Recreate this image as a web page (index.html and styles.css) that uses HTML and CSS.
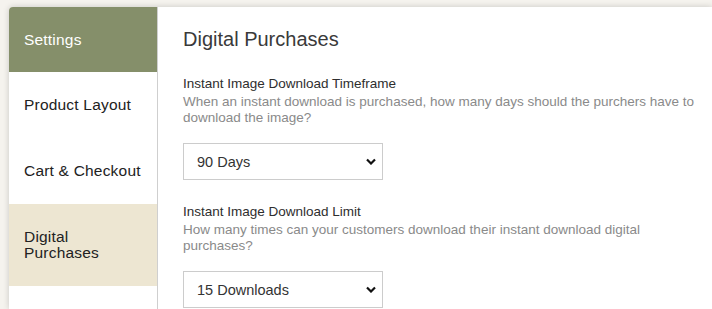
FILE: index.html
```html
<!DOCTYPE html>
<html lang="en">
<head>
    <meta charset="UTF-8">
    <meta name="viewport" content="width=device-width, initial-scale=1.0">
    <title>Store Settings - Digital Purchases</title>
    <link rel="stylesheet" href="styles.css">
</head>
<body>
    <div class="panel">
        <nav class="sidebar">
            <div class="nav-item nav-head">Settings</div>
            <div class="nav-item">Product Layout</div>
            <div class="nav-item">Cart &amp; Checkout</div>
            <div class="nav-item active">Digital<br>Purchases</div>
        </nav>

        <main class="content">
            <h2>Digital Purchases</h2>

            <div class="field">
                <label for="timeframe">Instant Image Download Timeframe</label>
                <p class="hint">When an instant download is purchased, how many days should the purchers have to download the image?</p>
                <select id="timeframe" class="select">
                    <option>90 Days</option>
                    <option>30 Days</option>
                    <option>60 Days</option>
                </select>
            </div>

            <div class="field">
                <label for="limit">Instant Image Download Limit</label>
                <p class="hint">How many times can your customers download their instant download digital purchases?</p>
                <select id="limit" class="select">
                    <option>15 Downloads</option>
                    <option>5 Downloads</option>
                    <option>10 Downloads</option>
                </select>
            </div>
        </main>
    </div>
</body>
</html>
```

FILE: styles.css
```css
* {
    margin: 0;
    padding: 0;
    box-sizing: border-box;
}

body {
    font-family: "Liberation Sans", Arial, sans-serif;
    background: #f5f3ee;
    padding: 7px 0 0 9px;
    height: 309px;
    overflow: hidden;
}

.panel {
    display: flex;
    background: white;
    border-radius: 4px 0 0 0;
    box-shadow: 0 0 6px rgba(0, 0, 0, 0.18);
    height: 302px;
}

.sidebar {
    width: 149px;
    flex-shrink: 0;
    border-right: 1px solid #cfcfcf;
}

.nav-item {
    padding: 24px 0 24px 15px;
    font-size: 15.5px;
    line-height: 18px;
    color: #222;
    letter-spacing: 0.2px;
    white-space: nowrap;
}

.nav-head {
    background: #858f6a;
    color: white;
    border-radius: 4px 0 0 0;
    height: 65px;
}

.nav-item.active {
    background: #ede6d2;
    padding: 25px 0 25px 15px;
    line-height: 16px;
}

.content {
    flex: 1;
    padding: 20px 0 0 25px;
    color: #333;
}

.content h2 {
    font-size: 20px;
    font-weight: normal;
    color: #3a3a3a;
    line-height: 24px;
    margin-bottom: 25px;
}

.field {
    margin-bottom: 24px;
}

.field label {
    display: block;
    font-size: 13.5px;
    color: #2e2e2e;
    line-height: 16px;
    margin-bottom: 2px;
}

.hint {
    font-size: 13.5px;
    line-height: 16px;
    color: #8a8a8a;
    max-width: 515px;
    margin-bottom: 17px;
}

.select {
    appearance: none;
    -webkit-appearance: none;
    width: 200px;
    height: 37px;
    border: 1px solid #cccccc;
    border-radius: 0;
    background: white url("data:image/svg+xml,%3Csvg xmlns='http://www.w3.org/2000/svg' width='10' height='7' viewBox='0 0 10 7'%3E%3Cpath d='M1 1.5l4 4 4-4' fill='none' stroke='%23111' stroke-width='2.2'/%3E%3C/svg%3E") no-repeat right 6px center;
    padding: 0 13px;
    font-family: inherit;
    font-size: 14.5px;
    color: #333;
}
```
